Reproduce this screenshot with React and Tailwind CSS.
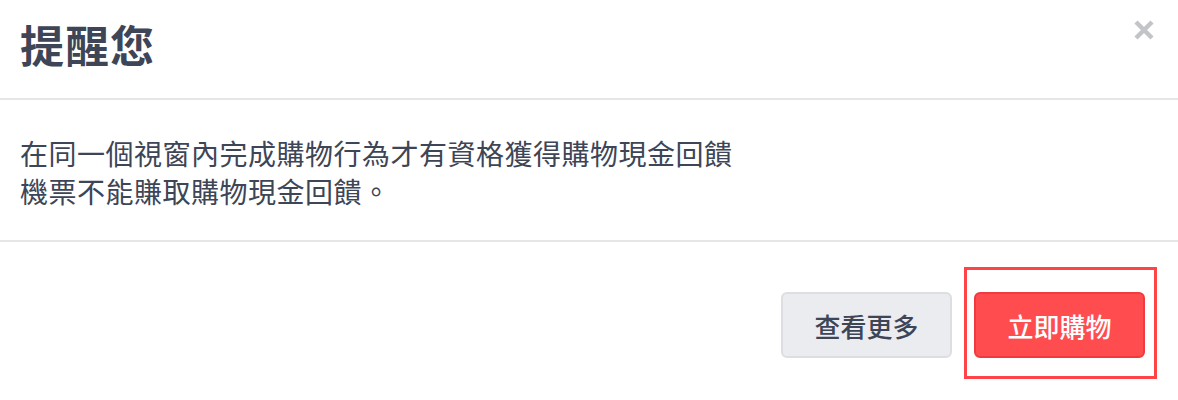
import React from 'react';

export default function App() {
  const font = { fontFamily: '"Noto Sans CJK TC", "Noto Sans", sans-serif' };

  return (
    <div className="w-[1178px] h-[400px] bg-white text-[#3d4556]" style={font}>
      {/* Header */}
      <div className="relative h-[100px] border-b-2 border-[#e6e6e6] pl-[20px] pt-[16px]">
        <h1 className="text-[44px] leading-[56px] font-bold tracking-[1px]">提醒您</h1>
        <button className="absolute right-[22px] top-[19px] w-[24px] h-[22px] flex items-center justify-center">
          <svg width="22" height="20" viewBox="0 0 22 20">
            <path d="M3 2 L19 18 M19 2 L3 18" stroke="#c2c4c8" strokeWidth="4.5" strokeLinecap="butt" />
          </svg>
        </button>
      </div>

      {/* Body */}
      <div className="h-[142px] border-b-2 border-[#e6e6e6] pl-[20px] pt-[34px] text-[28px] leading-[38px] tracking-[0.5px]">
        <p>在同一個視窗內完成購物行為才有資格獲得購物現金回饋</p>
        <p>機票不能賺取購物現金回饋。</p>
      </div>

      {/* Footer */}
      <div className="flex justify-end items-start gap-[22px] pr-[33px] pt-[50px]">
        <button className="w-[171px] h-[66px] rounded-[6px] bg-[#ebecef] border-2 border-[#dcdee2] text-[26px] font-medium text-[#3d4556]">
          查看更多
        </button>
        <div className="relative">
          <div className="absolute -left-[10px] -top-[25px] -right-[12px] -bottom-[21px] border-[3px] border-[#ff4448]"></div>
          <button className="relative w-[171px] h-[66px] rounded-[6px] bg-[#ff4d4f] border-2 border-[#f03a3e] text-[26px] font-medium text-white">
            立即購物
          </button>
        </div>
      </div>
    </div>
  );
}
